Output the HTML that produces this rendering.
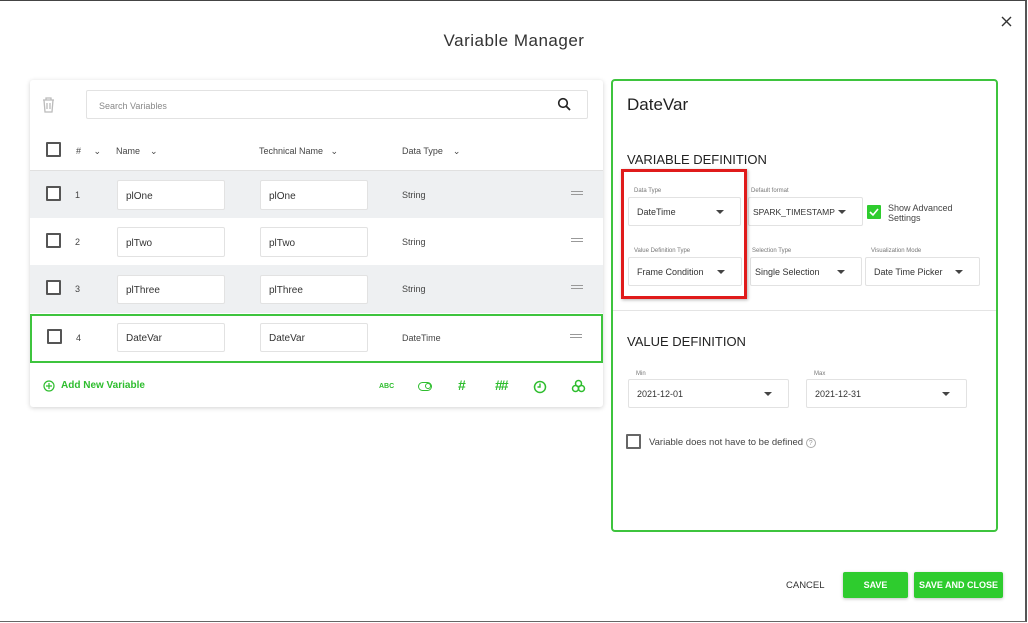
<!DOCTYPE html>
<html><head><meta charset="utf-8"><style>
*{box-sizing:border-box;margin:0;padding:0}
body{width:1028px;height:623px;background:#fff;font-family:"Liberation Sans",sans-serif;position:relative;overflow:hidden;color:#333}
.a{position:absolute}
.frame{left:0;top:0;width:1027px;height:622px;border-top:1px solid #444;border-right:2px solid #555;border-bottom:1px solid #666}
.card{left:30px;top:80px;width:573px;height:327px;background:#fff;box-shadow:0 1px 5px rgba(0,0,0,.18);border-radius:3px}
.inp{background:#fff;border:1px solid #e2e2e2;border-radius:2px;font-size:10px;color:#333;padding-left:8px;padding-top:2px;display:flex;align-items:center}
.cb{width:15px;height:15px;border:2px solid #555;border-radius:1px;background:#fff}
.t9{font-size:9px;color:#444}
.lbl{font-size:6px;color:#777}
.sel{background:#fff;border:1px solid #e2e2e2;border-radius:2px;font-size:9px;color:#333;padding-left:8px;display:flex;align-items:center;white-space:nowrap}
.sel:after{content:"";position:absolute;right:16px;top:50%;margin-top:-2px;border:4px solid transparent;border-top:4px solid #444;border-bottom:0}
.g{color:#2ebd2e}
.btn{background:#2ecc2e;color:#fff;font-size:9px;font-weight:bold;display:flex;align-items:center;justify-content:center;box-shadow:0 1px 3px rgba(0,0,0,.25);border-radius:2px}
</style></head><body>
<div class="a frame"></div>
<svg class="a" style="left:1001px;top:16px" width="11" height="11"><path d="M1 1l9 9M10 1l-9 9" stroke="#333" stroke-width="1.4"/></svg>
<div class="a" style="left:0;width:1028px;top:31px;text-align:center;font-size:17px;color:#333;letter-spacing:.5px">Variable Manager</div>

<div class="a card"></div>
<svg class="a" style="left:41px;top:96px" width="15" height="17" viewBox="0 0 15 17"><path d="M2 4h11M5 4V2h5v2M3 4l1 12h7l1-12M6 7v6M9 7v6" stroke="#bbb" fill="none" stroke-width="1.3"/></svg>
<div class="a inp" style="left:86px;top:90px;width:502px;height:29px;font-size:9px;color:#888;padding-left:12px">Search Variables</div>
<svg class="a" style="left:557px;top:97px" width="14" height="14"><circle cx="6" cy="6" r="4.3" stroke="#222" stroke-width="1.6" fill="none"/><path d="M9 9l4 4" stroke="#222" stroke-width="1.8"/></svg>

<div class="a cb" style="left:46px;top:142px"></div>
<div class="a t9" style="left:76px;top:146px">#&nbsp;&nbsp;&nbsp;&nbsp;&nbsp;⌄</div>
<div class="a t9" style="left:116px;top:146px">Name&nbsp;&nbsp;&nbsp;&nbsp;⌄</div>
<div class="a t9" style="left:259px;top:146px">Technical Name&nbsp;&nbsp;&nbsp;⌄</div>
<div class="a t9" style="left:402px;top:146px">Data Type&nbsp;&nbsp;&nbsp;&nbsp;⌄</div>

<div class="a" style="left:30px;top:170px;width:573px;height:48px;background:#eef0f2;border-top:1px solid #e0e0e0"></div>
<div class="a" style="left:30px;top:265px;width:573px;height:48px;background:#eef0f2"></div>
<div class="a" style="left:30px;top:314px;width:573px;height:49px;border:2px solid #3ec43e"></div>

<div class="a cb" style="left:46px;top:186px"></div><div class="a t9" style="left:75px;top:190px">1</div>
<div class="a inp" style="left:117px;top:180px;width:108px;height:30px">plOne</div>
<div class="a inp" style="left:260px;top:180px;width:108px;height:30px">plOne</div>
<div class="a t9" style="left:402px;top:190px">String</div>
<div class="a" style="left:571px;top:191px;width:12px;height:4px;border-top:1.5px solid #999;border-bottom:1.5px solid #999"></div>

<div class="a cb" style="left:46px;top:233px"></div><div class="a t9" style="left:75px;top:237px">2</div>
<div class="a inp" style="left:117px;top:227px;width:108px;height:30px">plTwo</div>
<div class="a inp" style="left:260px;top:227px;width:108px;height:30px">plTwo</div>
<div class="a t9" style="left:402px;top:237px">String</div>
<div class="a" style="left:571px;top:238px;width:12px;height:4px;border-top:1.5px solid #999;border-bottom:1.5px solid #999"></div>

<div class="a cb" style="left:46px;top:280px"></div><div class="a t9" style="left:75px;top:284px">3</div>
<div class="a inp" style="left:117px;top:275px;width:108px;height:29px">plThree</div>
<div class="a inp" style="left:260px;top:275px;width:108px;height:29px">plThree</div>
<div class="a t9" style="left:402px;top:284px">String</div>
<div class="a" style="left:571px;top:285px;width:12px;height:4px;border-top:1.5px solid #999;border-bottom:1.5px solid #999"></div>

<div class="a cb" style="left:47px;top:329px"></div><div class="a t9" style="left:76px;top:333px">4</div>
<div class="a inp" style="left:117px;top:323px;width:108px;height:29px">DateVar</div>
<div class="a inp" style="left:260px;top:323px;width:108px;height:29px">DateVar</div>
<div class="a t9" style="left:402px;top:333px">DateTime</div>
<div class="a" style="left:570px;top:334px;width:12px;height:4px;border-top:1.5px solid #999;border-bottom:1.5px solid #999"></div>

<svg class="a" style="left:43px;top:380px" width="12" height="12"><circle cx="6" cy="6" r="5" stroke="#2ebd2e" stroke-width="1.2" fill="none"/><path d="M6 3v6M3 6h6" stroke="#2ebd2e" stroke-width="1.2"/></svg>
<div class="a g" style="left:61px;top:380px;font-size:10px;font-weight:bold">Add New Variable</div>
<div class="a g" style="left:379px;top:383px;font-size:7px;font-weight:bold">ABC</div>
<div class="a" style="left:418px;top:382px;width:14px;height:9px;border:1.6px solid #2ebd2e;border-radius:5px"><div style="position:absolute;right:0;top:0;width:6px;height:6px;border:1.4px solid #2ebd2e;border-radius:50%"></div></div>
<div class="a g" style="left:458px;top:377px;font-size:14px;font-weight:bold">#</div>
<div class="a g" style="left:495px;top:377px;font-size:14px;font-weight:bold;letter-spacing:-2px">##</div>
<svg class="a" style="left:533px;top:380px" width="14" height="14"><circle cx="7" cy="7" r="5.5" stroke="#2ebd2e" stroke-width="1.5" fill="none"/><path d="M7 3.5V7H4.5" stroke="#2ebd2e" stroke-width="1.4" fill="none"/></svg>
<svg class="a" style="left:571px;top:379px" width="15" height="15"><circle cx="7.5" cy="4.5" r="3" stroke="#2ebd2e" stroke-width="1.5" fill="none"/><circle cx="4.5" cy="9.5" r="3" stroke="#2ebd2e" stroke-width="1.5" fill="none"/><circle cx="10.5" cy="9.5" r="3" stroke="#2ebd2e" stroke-width="1.5" fill="none"/></svg>

<div class="a" style="left:611px;top:79px;width:387px;height:453px;border:2px solid #3ec43e;border-radius:4px"></div>
<div class="a" style="left:627px;top:95px;font-size:17px;color:#222">DateVar</div>
<div class="a" style="left:627px;top:152px;font-size:13px;color:#222">VARIABLE DEFINITION</div>

<div class="a lbl" style="left:634px;top:188px">Data Type</div>
<div class="a sel" style="left:628px;top:197px;width:113px;height:29px">DateTime</div>
<div class="a lbl" style="left:751px;top:188px">Default format</div>
<div class="a sel" style="left:748px;top:197px;width:115px;height:29px;padding-left:4px;font-size:8.5px">SPARK_TIMESTAMP</div>
<div class="a" style="left:867px;top:205px;width:14px;height:14px;background:#2ecc2e;border-radius:1px"><svg width="14" height="14"><path d="M3 7l3 3 5-6" stroke="#fff" stroke-width="1.6" fill="none"/></svg></div>
<div class="a t9" style="left:888px;top:203px;line-height:10px">Show Advanced<br>Settings</div>

<div class="a lbl" style="left:634px;top:248px">Value Definition Type</div>
<div class="a sel" style="left:628px;top:257px;width:114px;height:29px">Frame Condition</div>
<div class="a lbl" style="left:752px;top:248px">Selection Type</div>
<div class="a sel" style="left:750px;top:257px;width:112px;height:29px;padding-left:4px">Single Selection</div>
<div class="a lbl" style="left:871px;top:248px">Visualization Mode</div>
<div class="a sel" style="left:865px;top:257px;width:115px;height:29px">Date Time Picker</div>

<div class="a" style="left:621px;top:169px;width:126px;height:130px;border:3px solid #e01b1b;box-shadow:1px 1px 3px rgba(0,0,0,.3)"></div>

<div class="a" style="left:613px;top:310px;width:383px;border-top:1px solid #e4e4e4"></div>
<div class="a" style="left:627px;top:334px;font-size:13px;color:#222">VALUE DEFINITION</div>
<div class="a lbl" style="left:636px;top:371px">Min</div>
<div class="a sel" style="left:628px;top:379px;width:161px;height:29px">2021-12-01</div>
<div class="a lbl" style="left:814px;top:371px">Max</div>
<div class="a sel" style="left:806px;top:379px;width:161px;height:29px">2021-12-31</div>
<div class="a cb" style="left:626px;top:434px;border-color:#666"></div>
<div class="a t9" style="left:649px;top:437px;font-size:9.5px">Variable does not have to be defined <span style="display:inline-block;width:10px;height:10px;border:1px solid #aaa;border-radius:50%;font-size:7px;text-align:center;line-height:9px;color:#999">?</span></div>

<div class="a" style="left:786px;top:580px;font-size:9.5px;color:#333">CANCEL</div>
<div class="a btn" style="left:843px;top:572px;width:65px;height:26px">SAVE</div>
<div class="a btn" style="left:914px;top:572px;width:89px;height:26px">SAVE AND CLOSE</div>
</body></html>
